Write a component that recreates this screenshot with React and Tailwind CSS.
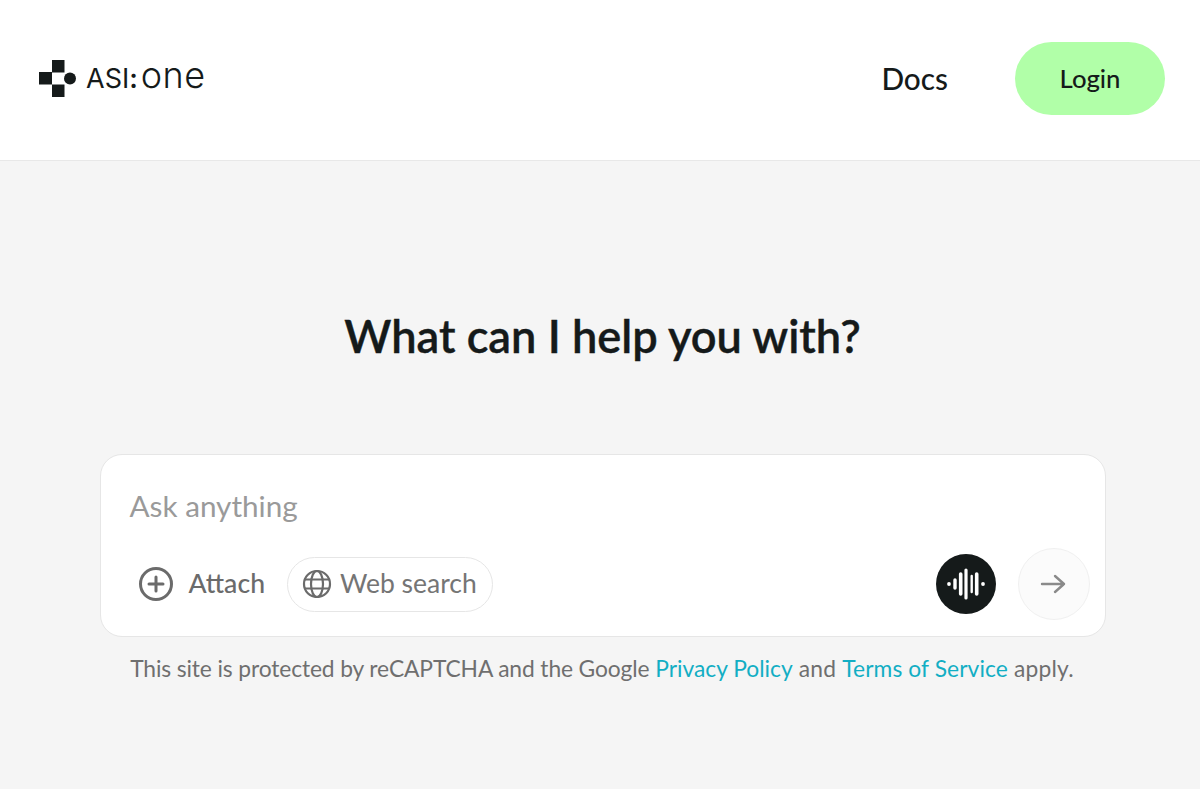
import React from 'react';

const sans = { fontFamily: 'Lato, "Noto Sans", sans-serif' };

const Logo = () => (
  <div className="flex items-center">
    <svg width="38" height="38" viewBox="0 0 38 38" className="shrink-0">
      <rect x="0" y="12" width="13" height="12.5" fill="#151a1a" />
      <rect x="13" y="0" width="12.5" height="12.5" fill="#151a1a" />
      <rect x="13" y="24.5" width="12.5" height="12.5" fill="#151a1a" />
      <circle cx="31" cy="18.5" r="6" fill="#151a1a" />
    </svg>
    <span className="ml-[9px] -mt-[8px] flex items-baseline font-light leading-none text-[#151a1a]" style={{ fontFamily: 'Inter, sans-serif' }}>
      <span className="text-[27px] font-normal">ASI<span className="font-semibold">:</span></span>
      <span className="ml-[3px] text-[36px] tracking-[0.4px]">one</span>
    </span>
  </div>
);

const VoiceIcon = () => (
  <svg width="40" height="34" viewBox="0 0 40 34" stroke="#fff" strokeLinecap="round" fill="none">
    <circle cx="3" cy="17" r="1.9" fill="#fff" stroke="none" />
    <path d="M9 13v8" strokeWidth="3.4" />
    <path d="M14.7 7v20" strokeWidth="3.6" />
    <path d="M20 3v28" strokeWidth="3.2" />
    <path d="M25.7 9v16" strokeWidth="2.4" />
    <path d="M30.7 7v20" strokeWidth="3.6" />
    <circle cx="37" cy="17" r="1.9" fill="#fff" stroke="none" />
  </svg>
);

export default function App() {
  return (
    <div className="flex min-h-[789px] flex-col bg-[#f5f5f5]" style={sans}>
      <header className="flex h-[161px] items-start justify-between border-b border-[#e8e8e8] bg-white pl-[39px] pr-[35px]">
        <div className="mt-[60px]">
          <Logo />
        </div>
        <div className="mt-[42px] flex items-center">
          <a className="mr-[67px] mt-[1px] text-[29.8px] font-medium text-[#151a1a]">Docs</a>
          <button className="h-[73px] w-[150px] rounded-full bg-[#b1ffa8] text-[25.7px] font-medium text-[#151a1a]">
            Login
          </button>
        </div>
      </header>

      <main className="flex flex-col items-center">
        <h1 className="ml-[5px] mt-[145px] text-[45.2px] font-semibold leading-[60px] text-[#151a1a] [-webkit-text-stroke:0.4px_#151a1a]">
          What can I help you with?
        </h1>

        <div className="ml-[5px] mt-[88px] h-[183px] w-[1006px] rounded-[22px] border border-[#e6e6e6] bg-white pl-[30px] pr-[15px]">
          <div className="-ml-[1px] mt-[31px] text-[29.7px] leading-[40px] text-[#9a9a9a]">Ask anything</div>
          <div className="mt-[22px] flex items-center">
            <button className="ml-[7px] flex items-center">
              <svg width="36" height="36" viewBox="0 0 36 36" fill="none" stroke="#6b6b6b" strokeWidth="3" strokeLinecap="round">
                <circle cx="18" cy="18" r="15.5" />
                <path d="M18 11v14M11 18h14" />
              </svg>
              <span className="ml-[15px] text-[26.6px] font-medium text-[#6b6b6b]">Attach</span>
            </button>
            <button className="ml-[22px] flex h-[55px] w-[206px] items-center rounded-full border border-[#e6e6e6] pl-[14px] text-[#757575]">
              <svg width="30" height="30" viewBox="0 0 30 30" fill="none" stroke="#6b6b6b" strokeWidth="2.2">
                <circle cx="15" cy="15" r="13" />
                <ellipse cx="15" cy="15" rx="6" ry="13" />
                <path d="M3 10.5h24M3 19.5h24" />
              </svg>
              <span className="ml-[8px] text-[26.5px]">Web search</span>
            </button>
            <button className="ml-auto flex h-[60px] w-[60px] items-center justify-center rounded-full bg-[#151a1a]">
              <VoiceIcon />
            </button>
            <button className="ml-[22px] flex h-[72px] w-[72px] items-center justify-center rounded-full border border-[#f0f0f0] bg-[#fbfbfb]">
              <svg width="28" height="24" viewBox="0 0 28 24" fill="none" stroke="#8a8a8a" strokeWidth="2.4" strokeLinecap="round" strokeLinejoin="round">
                <path d="M2 12h22M15 4l9 8-9 8" />
              </svg>
            </button>
          </div>
        </div>

        <p className="ml-[4px] mt-[16px] text-[22.8px] leading-[30px] text-[#6f6f6f]">
          <span className="tracking-[-0.12px]">This site is protected by reCAPTCHA and the Google </span>
          <a className="text-[#12aec4]">Privacy Policy</a>
          <span className="tracking-[0.2px]"> and </span>
          <a className="tracking-[0.1px] text-[#12aec4]">Terms of Service</a>
          <span className="tracking-[0.2px]"> apply.</span>
        </p>
      </main>
    </div>
  );
}
